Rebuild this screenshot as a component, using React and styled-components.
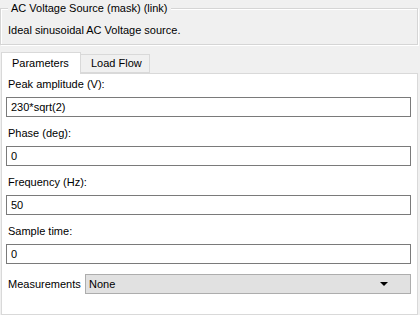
import React from "react";
import styled, { createGlobalStyle } from "styled-components";

const GlobalStyle = createGlobalStyle`
  html, body {
    margin: 0;
    padding: 0;
    background: #f0f0f0;
  }
  body {
    font-family: "Liberation Sans", Arial, sans-serif;
    font-size: 11px;
    color: #000;
  }
`;

const Dialog = styled.div`
  width: 420px;
  height: 315px;
  overflow: hidden;
  background: #f0f0f0;
  display: flex;
  flex-direction: column;
`;

const GroupBox = styled.div`
  position: relative;
  margin: 8px 2px 0 0;
  height: 35px;
  border: 1px solid #d5d5d5;
  box-shadow: inset 1px 1px 0 #fff, 1px 1px 0 #fff;
`;

const GroupTitle = styled.span`
  position: absolute;
  top: -8px;
  left: 7px;
  padding: 0 3px;
  background: #f0f0f0;
  line-height: 15px;
`;

const Description = styled.div`
  padding: 14px 0 0 7px;
  line-height: 15px;
`;

const TabBar = styled.div`
  display: flex;
  align-items: flex-end;
  margin: 6px 0 0 1px;
  height: 22px;
  position: relative;
  z-index: 1;
`;

const Tab = styled.div`
  box-sizing: border-box;
  height: ${(p) => (p.$active ? "22px" : "19px")};
  width: ${(p) => p.$w}px;
  margin-bottom: ${(p) => (p.$active ? "-1px" : "0")};
  border: 1px solid #d9d9d9;
  border-bottom: ${(p) => (p.$active ? "none" : "1px solid #d9d9d9")};
  border-left: ${(p) => (p.$first ? "1px solid #d9d9d9" : "none")};
  background: ${(p) => (p.$active ? "#fff" : "#f0f0f0")};
  padding-left: ${(p) => p.$pl}px;
  line-height: ${(p) => (p.$active ? "21px" : "17px")};
  white-space: nowrap;
`;

const Panel = styled.div`
  box-sizing: border-box;
  margin-left: 1px;
  width: 417px;
  height: 242px;
  background: #fff;
  border: 1px solid #d9d9d9;
  padding: 3px 6px 0 4px;
  display: flex;
  flex-direction: column;
  gap: 9px;
`;

const Field = styled.div`
  display: flex;
  flex-direction: column;
  gap: 6px;
`;

const Label = styled.label`
  padding-left: 2px;
  line-height: 14px;
`;

const Input = styled.div`
  box-sizing: border-box;
  height: 20px;
  border: 1px solid #7a7a7a;
  background: #fff;
  padding-left: 4px;
  line-height: 18px;
`;

const Row = styled.div`
  display: flex;
  align-items: center;
  margin-top: 1px;
`;

const RowLabel = styled.span`
  width: 77px;
  padding-left: 2px;
  white-space: nowrap;
`;

const Select = styled.div`
  box-sizing: border-box;
  flex: 1;
  height: 20px;
  border: 1px solid #adadad;
  background: #e1e1e1;
  display: flex;
  align-items: center;
  justify-content: space-between;
  padding: 0 22px 0 3px;
`;

const Arrow = styled.span`
  width: 0;
  height: 0;
  border-left: 4px solid transparent;
  border-right: 4px solid transparent;
  border-top: 4px solid #000;
`;

const fields = [
  ["Peak amplitude (V):", "230*sqrt(2)"],
  ["Phase (deg):", "0"],
  ["Frequency (Hz):", "50"],
  ["Sample time:", "0"],
];

export default function App() {
  return (
    <Dialog>
      <GlobalStyle />
      <GroupBox>
        <GroupTitle>AC Voltage Source (mask) (link)</GroupTitle>
        <Description>Ideal sinusoidal AC Voltage source.</Description>
      </GroupBox>
      <TabBar>
        <Tab $active $first $w={80} $pl={10}>Parameters</Tab>
        <Tab $w={69} $pl={10}>Load Flow</Tab>
      </TabBar>
      <Panel>
        {fields.map(([label, value]) => (
          <Field key={label}>
            <Label>{label}</Label>
            <Input>{value}</Input>
          </Field>
        ))}
        <Row>
          <RowLabel>Measurements</RowLabel>
          <Select>
            <span>None</span>
            <Arrow />
          </Select>
        </Row>
      </Panel>
    </Dialog>
  );
}
